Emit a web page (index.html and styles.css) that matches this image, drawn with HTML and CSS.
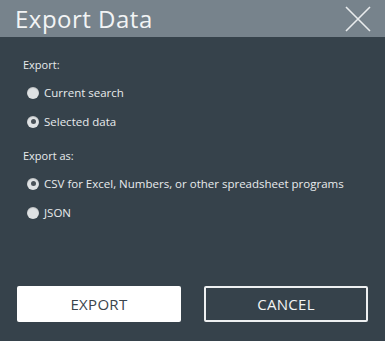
FILE: index.html
```html
<!DOCTYPE html>
<html>
<head>
<meta charset="utf-8">
<link rel="stylesheet" href="styles.css">
</head>
<body>
<div class="dialog">
  <div class="header">
    <h1 class="title">Export Data</h1>
    <button class="close" aria-label="Close">
      <svg width="26" height="26" viewBox="0 0 26 26"><path d="M1 1 L25 25 M25 1 L1 25" stroke="#e9ecee" stroke-width="1.6" fill="none"/></svg>
    </button>
  </div>
  <div class="body">
    <div class="group">
      <div class="label">Export:</div>
      <label class="option"><span class="radio"></span><span>Current search</span></label>
      <label class="option"><span class="radio checked"></span><span>Selected data</span></label>
    </div>
    <div class="group">
      <div class="label">Export as:</div>
      <label class="option"><span class="radio checked"></span><span>CSV for Excel, Numbers, or other spreadsheet programs</span></label>
      <label class="option"><span class="radio"></span><span>JSON</span></label>
    </div>
  </div>
  <div class="actions">
    <button class="btn primary">EXPORT</button>
    <button class="btn secondary">CANCEL</button>
  </div>
</div>
</body>
</html>
```
FILE: styles.css
```css
* { box-sizing: border-box; }
html, body { margin: 0; padding: 0; }
body {
  width: 385px;
  height: 341px;
  background: #36424b;
  font-family: "Open Sans", "Noto Sans", sans-serif;
  color: #e8ebed;
}
.dialog {
  width: 385px;
  height: 341px;
  display: flex;
  flex-direction: column;
  background: #36424b;
}
.header {
  height: 37px;
  background: #77838c;
  display: flex;
  align-items: center;
  justify-content: space-between;
  padding: 0 14px 0 15px;
}
.title {
  margin: 0;
  font-weight: 400;
  font-size: 24px;
  color: #f2f4f5;
  letter-spacing: 0.5px;
}
.close {
  background: none;
  border: 0;
  padding: 0;
  width: 26px;
  height: 26px;
  display: flex;
}
.body {
  padding: 20px 23px 0 23px;
  flex: 1;
}
.group { margin-bottom: 12px; }
.label {
  font-size: 11px;
  height: 16px;
  line-height: 16px;
  margin-bottom: 5px;
}
.option {
  display: flex;
  align-items: center;
  height: 29px;
  font-size: 11.5px;
  gap: 5px;
  padding-left: 4px;
}
.radio {
  width: 12px;
  height: 12px;
  border-radius: 50%;
  background: #dfe2e4;
  box-shadow: inset 0 1px 1px rgba(0,0,0,0.15);
  display: flex;
  align-items: center;
  justify-content: center;
}
.radio.checked::after {
  content: "";
  width: 5px;
  height: 5px;
  border-radius: 50%;
  background: #4a5259;
}
.actions {
  display: flex;
  justify-content: space-between;
  padding: 0 17px 19px 17px;
}
.btn {
  width: 164px;
  height: 36px;
  font-family: "Open Sans", "Noto Sans", sans-serif;
  font-size: 15px;
  font-weight: 500;
  letter-spacing: 0.3px;
  border-radius: 2px;
  cursor: pointer;
}
.primary {
  background: #ffffff;
  border: 0;
  color: #3a444c;
}
.secondary {
  background: transparent;
  border: 2px solid #eef0f1;
  color: #f2f4f5;
}
```
